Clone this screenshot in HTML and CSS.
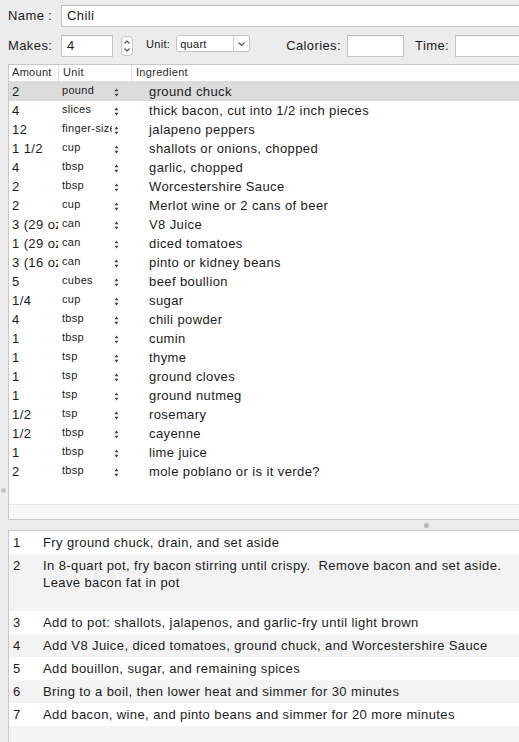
FILE: index.html
```html
<!DOCTYPE html>
<html>
<head>
<meta charset="utf-8">
<title>Chili</title>
<link rel="stylesheet" href="styles.css">
</head>
<body>
<div class="window">
  <div class="form-row first">
    <span class="label">Name :</span>
    <div class="field name-field">Chili</div>
  </div>
  <div class="form-row second">
    <span class="label">Makes:</span>
    <div class="field makes-field">4</div>
    <div class="stepper">
      <svg width="12" height="20" viewBox="0 0 12 20"><path d="M3.5 7.5 L6 5 L8.5 7.5" fill="none" stroke="#555" stroke-width="1.1"/><path d="M3.5 12.5 L6 15 L8.5 12.5" fill="none" stroke="#555" stroke-width="1.1"/></svg>
    </div>
    <span class="small-label">Unit:</span>
    <div class="select">
      <span class="select-value">quart</span>
      <span class="select-arrow"><svg width="9" height="6" viewBox="0 0 9 6"><path d="M1.5 1.5 L4.5 4.5 L7.5 1.5" fill="none" stroke="#555" stroke-width="1.1"/></svg></span>
    </div>
    <span class="label calories-label">Calories:</span>
    <div class="field calories-field"></div>
    <span class="label time-label">Time:</span>
    <div class="field time-field"></div>
  </div>

  <div class="table">
    <div class="table-head">
      <div class="th amount-h">Amount</div>
      <div class="th unit-h">Unit</div>
      <div class="th ingredient-h">Ingredient</div>
    </div>
    <div class="table-body" id="ingredients"></div>
    <div class="hscroll"></div>
  </div>

  <div class="splitter"><span class="grip"></span></div>

  <div class="steps" id="steps"></div>

  <span class="side-grip"></span>
</div>
<script src="app.js"></script>
</body>
</html>
```

FILE: styles.css
```css
html, body {
  margin: 0;
  padding: 0;
  overflow: hidden;
}
body {
  background: #ececec;
  font-family: "Liberation Sans", Arial, sans-serif;
  font-size: 13px;
  letter-spacing: 0.4px;
  color: #1b1b1b;
}
.window {
  position: relative;
  width: 540px;
  height: 742px;
  display: flex;
  flex-direction: column;
  padding-left: 8px;
  box-sizing: border-box;
}

/* top form */
.form-row {
  display: flex;
  align-items: center;
  height: 22px;
}
.form-row.first { margin-top: 5px; }
.form-row.second { margin-top: 8px; }
.label {
  width: 53px;
  flex: none;
  line-height: 16px;
  white-space: nowrap;
}
.field {
  height: 22px;
  box-sizing: border-box;
  background: #fff;
  border: 1px solid #c4c4c4;
  border-top-color: #b8b8b8;
  padding: 0 5px;
  line-height: 20px;
  font-size: 13px;
}
.name-field { width: 480px; }
.makes-field { width: 52px; }
.stepper {
  width: 12px;
  height: 20px;
  margin-left: 8px;
  border: 1px solid #c6c6c6;
  border-radius: 4px;
  background: #fdfdfd;
  box-sizing: border-box;
  display: flex;
  align-items: center;
  justify-content: center;
  overflow: hidden;
}
.stepper svg { flex: none; }
.small-label {
  font-size: 11px;
  letter-spacing: 0.3px;
  margin-left: 13px;
  margin-top: -4px;
}
.select {
  margin-left: 6px;
  margin-top: -5px;
  width: 74px;
  height: 17px;
  box-sizing: border-box;
  border: 1px solid #c4c4c4;
  border-radius: 3px;
  background: #fff;
  display: flex;
  align-items: center;
  font-size: 11px;
  letter-spacing: 0.3px;
}
.select-value {
  flex: 1;
  padding-left: 3px;
}
.select-arrow {
  width: 15px;
  height: 100%;
  border-left: 1px solid #d4d4d4;
  display: flex;
  align-items: center;
  justify-content: center;
}
.calories-label {
  width: auto;
  margin-left: 36px;
}
.calories-field {
  width: 57px;
  margin-left: 6px;
}
.time-label {
  width: auto;
  margin-left: 11px;
}
.time-field {
  width: 80px;
  margin-left: 6px;
}

/* ingredient table */
.table {
  margin-top: 7px;
  height: 456px;
  flex: none;
  background: #fff;
  border: 1px solid #c8c8c8;
  border-right: none;
  box-sizing: border-box;
  display: flex;
  flex-direction: column;
}
.table-head {
  display: grid;
  grid-template-columns: 49px 73px 1fr;
  height: 16px;
  border-bottom: 1px solid #dedede;
  font-size: 11px;
  letter-spacing: 0.3px;
  color: #2a2a2a;
  line-height: 15px;
  flex: none;
}
.th { padding-left: 3px; white-space: nowrap; }
.unit-h, .ingredient-h { border-left: 1px solid #dcdcdc; padding-left: 4px; }
.table-body { flex: 1; }
.ing-row {
  display: grid;
  grid-template-columns: 49px 54px 10px 1fr;
  height: 19px;
}
.ing-row.selected { background: #dcdcdc; }
.amount {
  padding-left: 3px;
  line-height: 20px;
  white-space: nowrap;
  overflow: hidden;
}
.unit {
  padding-left: 4px;
  font-size: 11px;
  letter-spacing: 0.3px;
  line-height: 16px;
  white-space: nowrap;
  overflow: hidden;
}
.arrows {
  display: flex;
  align-items: center;
  padding-left: 2px;
}
.ingredient {
  padding-left: 27px;
  line-height: 20px;
  white-space: nowrap;
}
.hscroll {
  height: 14px;
  background: #f7f7f7;
  border-top: 1px solid #e6e6e6;
  flex: none;
}

.splitter {
  height: 10px;
  flex: none;
  position: relative;
}
.grip {
  position: absolute;
  left: 416px;
  top: 3px;
  width: 5px;
  height: 5px;
  border-radius: 50%;
  background: #b9b9b9;
}
.side-grip {
  position: absolute;
  left: 1px;
  top: 488px;
  width: 5px;
  height: 5px;
  border-radius: 50%;
  background: #c4c4c4;
}

/* method steps */
.steps {
  flex: 1;
  background: #f4f4f4;
  border: 1px solid #c8c8c8;
  border-right: none;
  border-bottom: none;
  display: flex;
  flex-direction: column;
}
.step {
  display: flex;
  padding: 3px 0;
  line-height: 17px;
  background: #fff;
}
.step:nth-child(even) { background: #f3f3f3; }
.step-num {
  width: 30px;
  padding-left: 4px;
  flex: none;
}
.step-text { white-space: pre; }
```

FILE: app.js
```js
const ingredients = [
  ["2", "pound", "ground chuck"],
  ["4", "slices", "thick bacon, cut into 1/2 inch pieces"],
  ["12", "finger-size", "jalapeno peppers"],
  ["1 1/2", "cup", "shallots or onions, chopped"],
  ["4", "tbsp", "garlic, chopped"],
  ["2", "tbsp", "Worcestershire Sauce"],
  ["2", "cup", "Merlot wine or 2 cans of beer"],
  ["3 (29 oz)", "can", "V8 Juice"],
  ["1 (29 oz)", "can", "diced tomatoes"],
  ["3 (16 oz)", "can", "pinto or kidney beans"],
  ["5", "cubes", "beef boullion"],
  ["1/4", "cup", "sugar"],
  ["4", "tbsp", "chili powder"],
  ["1", "tbsp", "cumin"],
  ["1", "tsp", "thyme"],
  ["1", "tsp", "ground cloves"],
  ["1", "tsp", "ground nutmeg"],
  ["1/2", "tsp", "rosemary"],
  ["1/2", "tbsp", "cayenne"],
  ["1", "tbsp", "lime juice"],
  ["2", "tbsp", "mole poblano or is it verde?"]
];

const steps = [
  "Fry ground chuck, drain, and set aside",
  "In 8-quart pot, fry bacon stirring until crispy.  Remove bacon and set aside.\nLeave bacon fat in pot\n ",
  "Add to pot: shallots, jalapenos, and garlic-fry until light brown",
  "Add V8 Juice, diced tomatoes, ground chuck, and Worcestershire Sauce",
  "Add bouillon, sugar, and remaining spices",
  "Bring to a boil, then lower heat and simmer for 30 minutes",
  "Add bacon, wine, and pinto beans and simmer for 20 more minutes"
];

const arrowSvg =
  '<svg width="5" height="9" viewBox="0 0 5 9"><path d="M2.5 0.5 L4.6 3.3 L0.4 3.3 Z" fill="#444"/><path d="M2.5 8.5 L4.6 5.7 L0.4 5.7 Z" fill="#444"/></svg>';

const body = document.getElementById("ingredients");
ingredients.forEach(([amount, unit, name], i) => {
  const row = document.createElement("div");
  row.className = "ing-row" + (i === 0 ? " selected" : "");
  row.innerHTML =
    '<div class="amount"></div><div class="unit"></div><div class="arrows">' +
    arrowSvg + '</div><div class="ingredient"></div>';
  row.querySelector(".amount").textContent = amount;
  row.querySelector(".unit").textContent = unit;
  row.querySelector(".ingredient").textContent = name;
  body.appendChild(row);
});

const list = document.getElementById("steps");
steps.forEach((text, i) => {
  const row = document.createElement("div");
  row.className = "step";
  row.innerHTML = '<span class="step-num"></span><span class="step-text"></span>';
  row.querySelector(".step-num").textContent = String(i + 1);
  row.querySelector(".step-text").textContent = text;
  list.appendChild(row);
});
```
